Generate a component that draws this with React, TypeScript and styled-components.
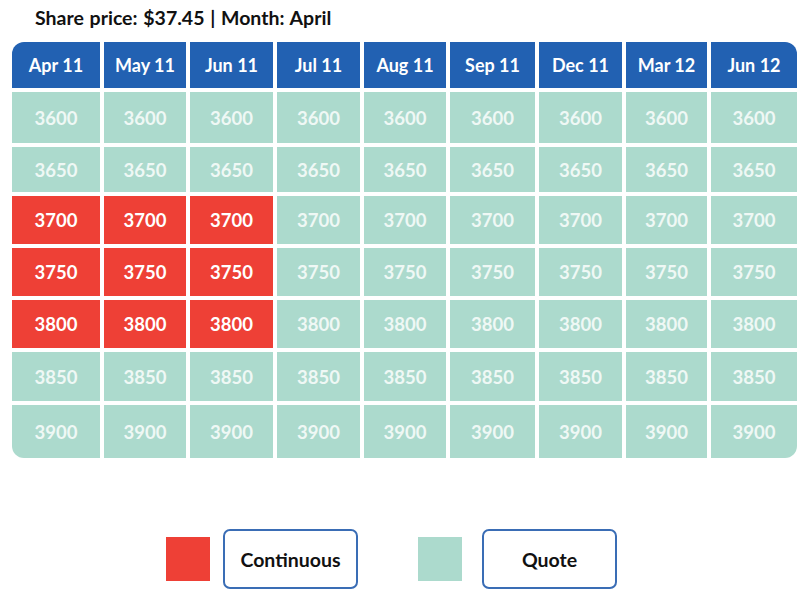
import React from "react";
import styled, { createGlobalStyle } from "styled-components";

const Global = createGlobalStyle`
  html, body { margin: 0; padding: 0; background: #ffffff; }
  body { font-family: Lato, "Open Sans", "Liberation Sans", sans-serif; }
`;

const Page = styled.div`
  width: 809px;
  height: 602px;
  box-sizing: border-box;
  padding: 6px 0 0 12px;
  display: flex;
  flex-direction: column;
`;

const Title = styled.div`
  margin-left: 23px;
  height: 24px;
  font-size: 19.5px;
  font-weight: 700;
  color: #111;
  line-height: 24px;
  word-spacing: 1px;
`;

const Grid = styled.div`
  margin-top: 12px;
  display: grid;
  grid-template-columns: 88px 82px 83px 83px 82px 85px 83px 81px 86px;
  grid-template-rows: 46px 51px 45px 48px 48px 48px 49px 53px;
  gap: 4px;
  width: 785px;
  border-radius: 12px;
  overflow: hidden;
`;

const HeadCell = styled.div`
  background: #2261b2;
  color: #ffffff;
  font-size: 18px;
  font-weight: 700;
  display: flex;
  align-items: center;
  justify-content: center;
`;

const Cell = styled.div<{ $red?: boolean }>`
  background: ${(p) => (p.$red ? "#ee4036" : "#acdacd")};
  color: ${(p) => (p.$red ? "#ffffff" : "#eff8f5")};
  font-size: 18.5px;
  font-weight: 700;
  display: flex;
  align-items: center;
  justify-content: center;
`;

const Legend = styled.div`
  margin-top: 71px;
  margin-left: 154px;
  display: flex;
  align-items: center;
`;

const Swatch = styled.div<{ $color: string; $gap: number }>`
  width: 44px;
  height: 44px;
  background: ${(p) => p.$color};
  margin-right: ${(p) => p.$gap}px;
`;

const LegendBox = styled.div`
  width: 135px;
  height: 60px;
  box-sizing: border-box;
  border: 2px solid #3a6db5;
  border-radius: 7px;
  display: flex;
  align-items: center;
  justify-content: center;
  font-size: 19.5px;
  font-weight: 700;
  color: #111;
  margin-right: 60px;
`;

const months = ["Apr 11", "May 11", "Jun 11", "Jul 11", "Aug 11", "Sep 11", "Dec 11", "Mar 12", "Jun 12"];
const strikes = [3600, 3650, 3700, 3750, 3800, 3850, 3900];

export default function App() {
  return (
    <>
      <Global />
      <Page>
        <Title>Share price: $37.45 | Month: April</Title>
        <Grid>
          {months.map((m) => (
            <HeadCell key={m}>{m}</HeadCell>
          ))}
          {strikes.map((s) =>
            months.map((m, ci) => (
              <Cell key={s + m} $red={ci < 3 && s >= 3700 && s <= 3800}>
                {s}
              </Cell>
            ))
          )}
        </Grid>
        <Legend>
          <Swatch $color="#ee4036" $gap={13} />
          <LegendBox>Continuous</LegendBox>
          <Swatch $color="#acdacd" $gap={20} />
          <LegendBox>Quote</LegendBox>
        </Legend>
      </Page>
    </>
  );
}
